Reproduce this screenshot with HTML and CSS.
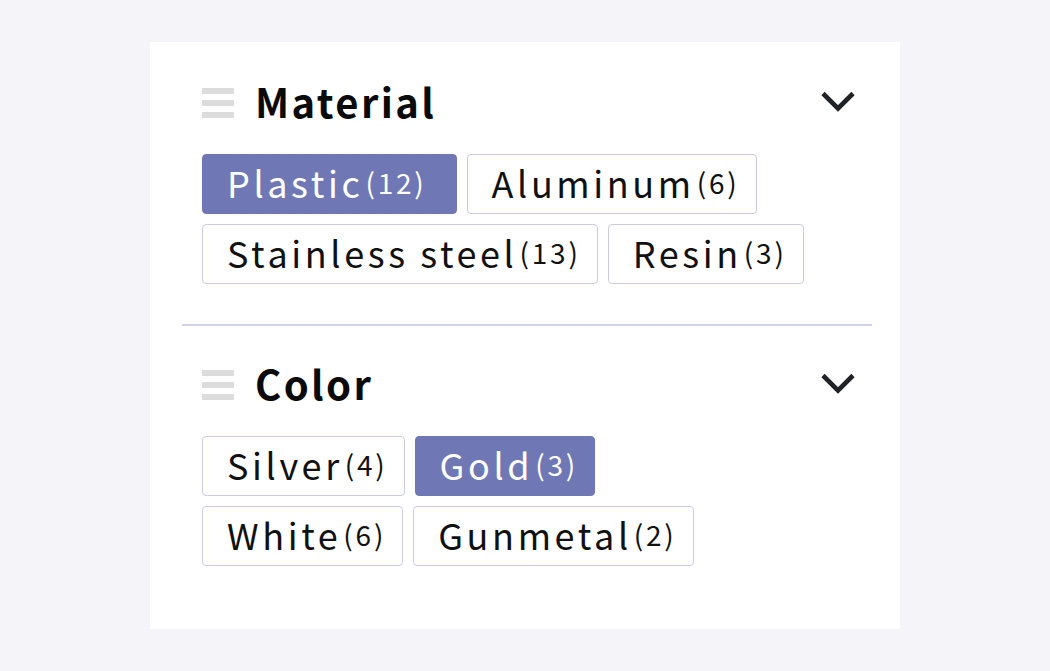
FILE: index.html
```html
<!DOCTYPE html>
<html lang="en">
<head>
<meta charset="utf-8">
<title>Filters</title>
<link rel="stylesheet" href="styles.css">
</head>
<body>
<div class="card">
  <section class="section section-first">
    <div class="head">
      <span class="handle"><i></i><i></i><i></i></span>
      <h2 class="title">Material</h2>
      <svg class="chev" viewBox="0 0 36 24" width="36" height="24"><path d="M3 3.5 L18 18.5 L33 3.5" fill="none" stroke="#1f2226" stroke-width="4.6"/></svg>
    </div>
    <div class="tags">
      <div class="row">
        <span class="tag on tag-wide">Plastic<span class="n">(12)</span></span>
        <span class="tag">Aluminum<span class="n">(6)</span></span>
      </div>
      <div class="row">
        <span class="tag">Stainless steel<span class="n">(13)</span></span>
        <span class="tag">Resin<span class="n">(3)</span></span>
      </div>
    </div>
  </section>
  <hr class="divider">
  <section class="section section-last">
    <div class="head">
      <span class="handle"><i></i><i></i><i></i></span>
      <h2 class="title">Color</h2>
      <svg class="chev" viewBox="0 0 36 24" width="36" height="24"><path d="M3 3.5 L18 18.5 L33 3.5" fill="none" stroke="#1f2226" stroke-width="4.6"/></svg>
    </div>
    <div class="tags">
      <div class="row">
        <span class="tag">Silver<span class="n">(4)</span></span>
        <span class="tag on">Gold<span class="n">(3)</span></span>
      </div>
      <div class="row">
        <span class="tag">White<span class="n">(6)</span></span>
        <span class="tag">Gunmetal<span class="n">(2)</span></span>
      </div>
    </div>
  </section>
</div>
</body>
</html>
```
FILE: styles.css
```css
html, body {
  margin: 0;
  padding: 0;
}
body {
  background: #f5f5f9;
  font-family: "Noto Sans CJK JP", "Noto Sans", sans-serif;
  color: #111;
  padding: 42px 150px;
  height: 671px;
  box-sizing: border-box;
}
.card {
  background: #fff;
  width: 750px;
  height: 587px;
  box-sizing: border-box;
}
.section {
  padding: 31px 52px 40px 52px;
}
.section-last {
  padding-top: 29px;
}
.head {
  display: flex;
  align-items: center;
  height: 60px;
}
.handle {
  display: flex;
  flex-direction: column;
  gap: 6px;
  width: 32px;
  margin-right: 21px;
}
.handle i {
  display: block;
  height: 6px;
  background: #dcdcdc;
}
.title {
  margin: 0 0 5px 0;
  font-size: 40px;
  font-weight: 700;
  letter-spacing: 0.06em;
  line-height: 50px;
  flex: 1;
  color: #0a0a0a;
}
.chev {
  display: block;
  margin-right: -8px;
  margin-bottom: 2px;
}
.tags {
  display: flex;
  flex-direction: column;
  gap: 10px;
  margin-top: 21px;
}
.row {
  display: flex;
  gap: 10px;
}
.tag {
  display: inline-flex;
  align-items: center;
  height: 60px;
  box-sizing: border-box;
  border: 1px solid #cbcbe3;
  border-radius: 4px;
  padding: 0 16px 4px 24px;
  font-size: 36px;
  letter-spacing: 0.1em;
  color: #111;
  line-height: 1;
}
.tag .n {
  font-size: 28px;
  letter-spacing: 0.1em;
  margin-left: 2px;
}
.tag.on {
  background: #6f78b4;
  border-color: #6f78b4;
  color: #fff;
}
.tag-wide {
  padding-right: 29px;
}
.divider {
  border: 0;
  height: 2px;
  background: #d2d2e8;
  margin: 0 28px 0 32px;
}
```
